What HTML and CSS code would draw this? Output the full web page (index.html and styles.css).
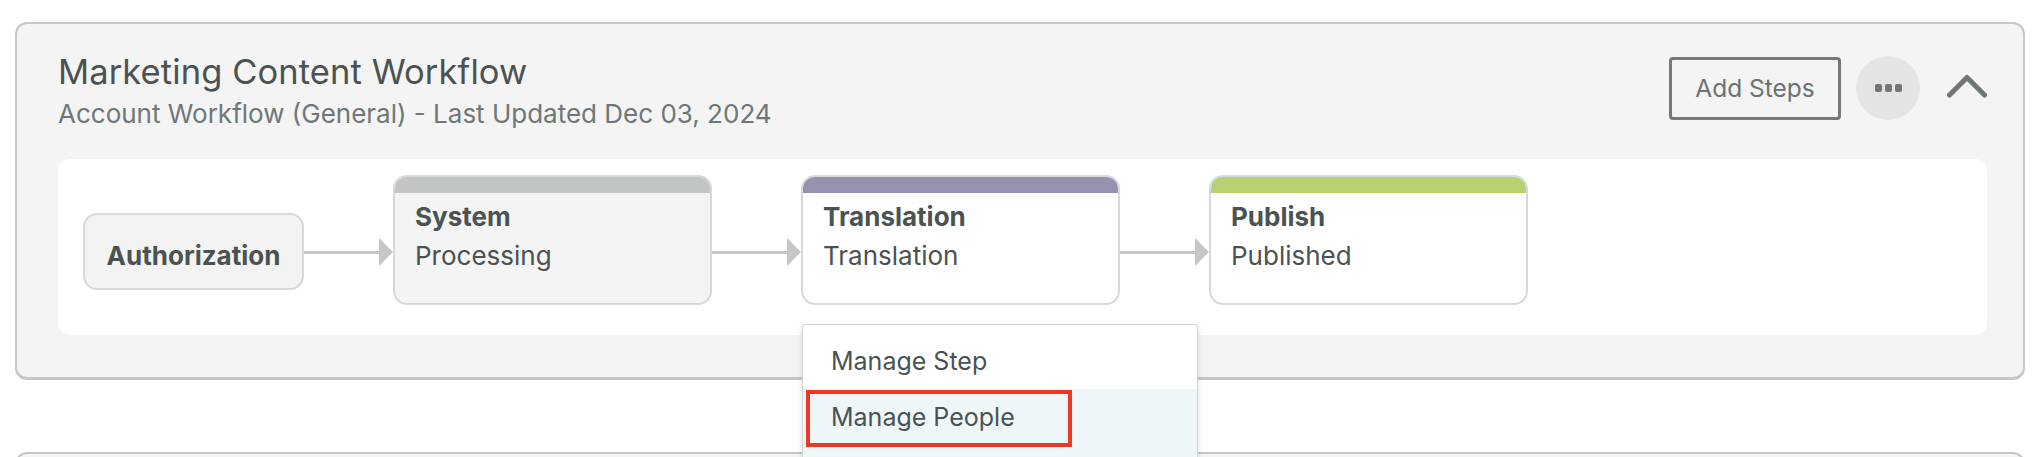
FILE: index.html
```html
<!DOCTYPE html>
<html lang="en">
<head>
<meta charset="utf-8">
<title>Marketing Content Workflow</title>
<link rel="stylesheet" href="styles.css">
</head>
<body>
<div class="page">
  <section class="card">
    <header class="card-head">
      <div class="head-text">
        <h1 class="title">Marketing Content Workflow</h1>
        <p class="subtitle">Account Workflow (General) - Last Updated Dec 03, 2024</p>
      </div>
      <div class="head-actions">
        <button class="btn-outline" type="button">Add Steps</button>
        <button class="btn-more" type="button" aria-label="More">
          <span class="dot"></span><span class="dot"></span><span class="dot"></span>
        </button>
        <button class="btn-collapse" type="button" aria-label="Collapse">
          <svg width="40" height="24" viewBox="0 0 40 24"><polyline points="2.5,21 20,3.5 37.5,21" fill="none" stroke="#6f7675" stroke-width="5" stroke-linecap="round" stroke-linejoin="round"/></svg>
        </button>
      </div>
    </header>

    <div class="flow-panel">
      <div class="flow">
        <div class="auth">Authorization</div>
        <div class="connector"><span class="line"></span><span class="tip"></span></div>
        <div class="step step-system">
          <div class="step-bar"></div>
          <div class="step-body">
            <div class="step-name">System</div>
            <div class="step-status">Processing</div>
          </div>
        </div>
        <div class="connector"><span class="line"></span><span class="tip"></span></div>
        <div class="step-wrap">
          <div class="step step-translation">
            <div class="step-bar"></div>
            <div class="step-body">
              <div class="step-name">Translation</div>
              <div class="step-status">Translation</div>
            </div>
          </div>
          <ul class="menu">
            <li class="menu-item">Manage Step</li>
            <li class="menu-item is-active">Manage People<span class="highlight"></span></li>
          </ul>
        </div>
        <div class="connector"><span class="line"></span><span class="tip"></span></div>
        <div class="step step-publish">
          <div class="step-bar"></div>
          <div class="step-body">
            <div class="step-name">Publish</div>
            <div class="step-status">Published</div>
          </div>
        </div>
      </div>
    </div>
  </section>

  <section class="card card-next"></section>
</div>
</body>
</html>
```

FILE: styles.css
```css
* { box-sizing: border-box; }

html, body {
  margin: 0;
  padding: 0;
  background: #ffffff;
  overflow: hidden;
}

body {
  font-family: Inter, "Noto Sans", sans-serif;
  color: #4b5251;
}

.page {
  padding: 22px 0 0 15px;
  width: 2039px;
  height: 457px;
  overflow: hidden;
}

.card {
  width: 2010px;
  height: 358px;
  background: #f3f4f3;
  border: 2px solid #c3c7c5;
  border-bottom-width: 3px;
  border-radius: 12px;
  padding: 28px 36px 0 41px;
}

.card-next {
  margin-top: 72px;
  height: 120px;
  background: #f3f4f3;
}

.card-head {
  display: flex;
  justify-content: space-between;
  align-items: flex-start;
  height: 78px;
}

.title {
  margin: 0;
  font-size: 34.5px;
  line-height: 40px;
  font-weight: 400;
  color: #4b5251;
  letter-spacing: 0.1px;
}

.subtitle {
  margin: 7px 0 0;
  font-size: 26px;
  line-height: 30px;
  color: #6f7776;
}

.head-actions {
  display: flex;
  align-items: center;
  margin-top: 4px;
  height: 64px;
}

.btn-outline {
  width: 172px;
  height: 63px;
  border: 3px solid #737a79;
  border-radius: 4px;
  background: transparent;
  font-family: Inter, "Noto Sans", sans-serif;
  font-size: 24.5px;
  color: #6b7271;
  padding: 0;
  cursor: pointer;
}

.btn-more {
  margin-left: 15px;
  width: 64px;
  height: 64px;
  border-radius: 50%;
  border: 0;
  background: #e3e5e4;
  display: flex;
  align-items: center;
  justify-content: center;
  gap: 3px;
  padding: 0;
}

.dot {
  width: 7px;
  height: 8px;
  border-radius: 2px;
  background: #6f7675;
}

.btn-collapse {
  margin-left: 27px;
  width: 40px;
  height: 24px;
  border: 0;
  padding: 0;
  background: transparent;
  margin-bottom: 5px;
  display: block;
}

.btn-collapse svg { display: block; }

.flow-panel {
  margin-top: 29px;
  height: 176px;
  background: #ffffff;
  border-radius: 12px;
  padding: 16px 25px;
}

.flow {
  display: flex;
  align-items: flex-start;
}

.auth {
  margin-top: 38px;
  width: 221px;
  height: 77px;
  background: #f2f3f2;
  border: 2px solid #d6d9d7;
  border-radius: 14px;
  padding-top: 21px;
  text-align: center;
  font-size: 26px;
  line-height: 39px;
  font-weight: 700;
  color: #4b5251;
}

.connector {
  width: 89px;
  height: 28px;
  margin-top: 63px;
  display: flex;
  align-items: center;
}

.line {
  flex: 1;
  height: 3px;
  background: #c3c8c6;
}

.tip {
  width: 0;
  height: 0;
  border-top: 14px solid transparent;
  border-bottom: 14px solid transparent;
  border-left: 14px solid #c3c8c6;
}

.step-wrap {
  position: relative;
}

.step {
  width: 319px;
  height: 130px;
  border: 2px solid #d6d9d7;
  border-radius: 14px;
  background: #ffffff;
  overflow: hidden;
}

.step-system { background: #f3f4f3; }

.step-bar {
  height: 16px;
  background: #c1c6c4;
}

.step-translation .step-bar { background: #9791b0; }
.step-publish .step-bar { background: #b9d070; }

.step-body {
  padding: 4px 0 0 20px;
  font-size: 26px;
  line-height: 39px;
  color: #4b5251;
}

.step-name { font-weight: 700; }

.menu {
  position: absolute;
  z-index: 5;
  top: 149px;
  left: 1px;
  width: 396px;
  height: 180px;
  margin: 0;
  padding: 8px 0 0;
  list-style: none;
  background: #ffffff;
  border: 1px solid #d4d7d6;
  border-radius: 3px;
  box-shadow: 0 2px 6px rgba(0, 0, 0, 0.12);
}

.menu-item {
  position: relative;
  height: 56px;
  line-height: 56px;
  padding-left: 28px;
  font-size: 25px;
  color: #4b5352;
}

.menu-item.is-active {
  background: #eef6f8;
  height: 120px;
}

.highlight {
  position: absolute;
  left: 3px;
  top: 1px;
  width: 266px;
  height: 57px;
  border: 4px solid #ef3823;
}
```
